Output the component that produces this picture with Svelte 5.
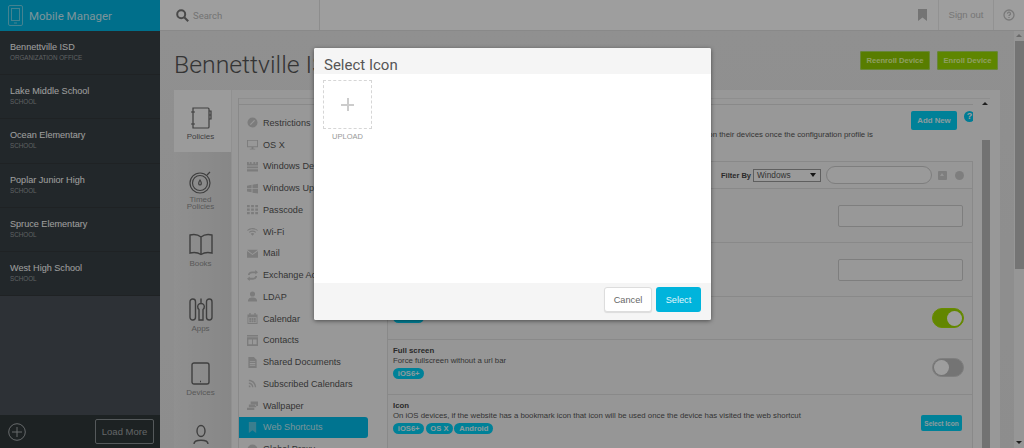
<script>
  const schools = [
    ['Bennettville ISD', 'ORGANIZATION OFFICE'],
    ['Lake Middle School', 'SCHOOL'],
    ['Ocean Elementary', 'SCHOOL'],
    ['Poplar Junior High', 'SCHOOL'],
    ['Spruce Elementary', 'SCHOOL'],
    ['West High School', 'SCHOOL']
  ];
  const menu = [
    { t: 'Restrictions', d: 'M6 .5a5.500 5.500 0 1 0 0 11 5.500 5.500 0 0 0 0-11zM3.200 7.800l4.600-4.600.9.900-4.600 4.600z' },
    { t: 'OS X', d: 'M0 1h12v8H7v1.500h2v1H3v-1h2V9H0zM1 2v6h10V2z' },
    { t: 'Windows Device', d: 'M0 1h2v2h1V1h2v2h2V1h2v2h1V1h2v4H0zM0 6h12v2H0zM0 9h12v2.500H0z' },
    { t: 'Windows Update', d: 'M0 3l5-1v3.700H0zM6 1.800l6-1v4.900H6zM0 6.500h5v3.500l-5-.8zM6 6.500h6v5l-6-1z' },
    { t: 'Passcode', d: 'M0 1h3v2.500H0zM4.500 1h3v2.500h-3zM9 1h3v2.500H9zM0 4.800h3v2.500H0zM4.500 4.800h3v2.500h-3zM9 4.800h3v2.500H9zM0 8.600h3v2.500H0zM4.500 8.600h3v2.500h-3zM9 8.600h3v2.500H9z' },
    { t: 'Wi-Fi', d: 'M0 4.500C3.500 1.500 8.500 1.500 12 4.500l-.8.800C8 2.800 4 2.800.8 5.300zM2 6.500c2.500-2 5.500-2 8 0l-.8.800c-2-1.500-4.400-1.500-6.400 0zM4 8.500c1.300-1 2.700-1 4 0L6 10.500z' },
    { t: 'Mail', d: 'M0 2h12L6 6.500zM0 3.200l6 4.500 6-4.500V10.500H0z' },
    { t: 'Exchange Accounts', d: 'M1 5.500C1 3 3 1.500 5.500 1.500H9V0l3 2.500L9 5V3.500H5.500C4 3.500 3 4.300 3 5.500zM11 6.500c0 2.500-2 4-4.500 4H3V12L0 9.500 3 7v1.500h3.500C8 8.500 9 7.700 9 6.500z' },
    { t: 'LDAP', d: 'M6 .5a2.800 2.800 0 1 1 0 5.600A2.800 2.800 0 0 1 6 .5zM1 11.500c0-3.500 2-4.500 5-4.500s5 1 5 4.500z' },
    { t: 'Calendar', d: 'M2.500 0h1.500v1.500h4V0h1.500v1.500H11.500V12H.5V1.500h2zM1.500 4.500v6.500h9V4.500zM2.500 5.500h2v2h-2zM5 5.500h2v2H5zM7.500 5.500h2v2h-2zM2.500 8h2v2h-2zM5 8h2v2H5zM7.500 8h2v2h-2z' },
    { t: 'Contacts', d: 'M0 0h12v1.500H0zM0 2.500h12V12H0zM1.500 5v5h4V5zM6.500 5v5h4V5z' },
    { t: 'Shared Documents', d: 'M1.500 0H7.500L10.500 3v9h-9zM3 4.500v1h6v-1zM3 6.500v1h6v-1zM3 8.500v1h6v-1z' },
    { t: 'Subscribed Calendars', d: 'M2 2c4.500 0 8 3.500 8 8H8.500C8.500 6.500 5.500 3.500 2 3.500zM2 5c2.800 0 5 2.200 5 5H5.500C5.500 8 4 6.500 2 6.500zM2 8a2 2 0 0 1 2 2H2z' },
    { t: 'Wallpaper', d: 'M4 1.500h8v5H9V4.500H4zM2 5h8v3H2zM0 8.500h8V11H0z' },
    { t: 'Web Shortcuts', d: 'M2 0h8v12L6 9l-4 3z' },
    { t: 'Global Proxy', d: 'M6 .5a5.500 5.500 0 1 0 0 11 5.500 5.500 0 0 0 0-11zM2 5h8v2H2z' }
  ];
</script>

<div class="page">
  <aside class="side">
    <div class="brand">
      <svg width="15" height="21" viewBox="0 0 15 21" fill="none" stroke="#6fd3ea" stroke-width="1"><rect x=".5" y=".5" width="14" height="20" rx="1.500"/><rect x="3.500" y="3.500" width="8" height="12"/><path d="M6 18h3"/></svg>
      <span>Mobile Manager</span>
    </div>
    <div class="list">
      {#each schools as s}
        <div class="school"><b>{s[0]}</b><small>{s[1]}</small></div>
      {/each}
    </div>
    <div class="foot">
      <svg width="18" height="18" viewBox="0 0 18 18" fill="none" stroke="#a5abad" stroke-width="1"><circle cx="9" cy="9" r="8.300"/><path d="M9 4v10M4 9h10"/></svg>
      <span class="more">Load More</span>
    </div>
  </aside>
  <div class="main">
    <header class="top">
      <div class="searchbox">
        <svg class="mag" width="13" height="13" viewBox="0 0 13 13" fill="none" stroke="#777" stroke-width="2"><circle cx="5.200" cy="5.200" r="4"/><path d="M8.200 8.200l4 4"/></svg>
        <span class="search">Search</span>
      </div>
      <span class="fill"></span>
      <svg class="bm" width="9" height="12" viewBox="0 0 9 12"><path d="M0 0h9v12L4.500 8.500 0 12z" fill="#bbb"/></svg>
      <span class="sign">Sign out</span>
      <span class="help"><svg width="12" height="12" viewBox="0 0 12 12" fill="none" stroke="#c4c4c4" stroke-width="1.300"><circle cx="6" cy="6" r="5"/><path d="M4.500 4.700a1.500 1.500 0 1 1 2 1.400c-.4.200-.5.500-.5.900M6 8v1"/></svg></span>
    </header>
    <div class="body">
      <div class="content">
        <div class="heading">
          <h1>Bennettville ISD</h1>
          <div class="greens"><button class="green g1">Reenroll Device</button><button class="green g2">Enroll Device</button></div>
        </div>
        <div class="panel">
          <nav class="tabs">
            <div class="tab on">
              <svg width="22" height="22" viewBox="0 0 22 22" fill="none" stroke="#666" stroke-width="1.200"><path d="M3 1h15a1 1 0 0 1 1 1v18a1 1 0 0 1-1 1H3zM1 5h4M1 17h4M19 4h2v4h-2M19 8h2v4h-2"/></svg>
              <span>Policies</span>
            </div>
            <div class="tab t2">
              <svg width="24" height="25" viewBox="0 0 24 25" fill="none" stroke="#666" stroke-width="1.200"><circle cx="11" cy="14" r="10"/><circle cx="11" cy="14" r="7.500"/><path d="M18 6l3-3M11 11c-2 3-1.500 5 0 5s2-2 0-5z"/></svg>
              <span>Timed<br>Policies</span>
            </div>
            <div class="tab t3">
              <svg width="24" height="23" viewBox="0 0 24 23" fill="none" stroke="#666" stroke-width="1.400"><path d="M12 4C9 1.500 5 1 1 2v18c4-1 8-.5 11 1.500 3-2 7-2.500 11-1.500V2c-4-1-8-.5-11 2zM12 4v17.500"/></svg>
              <span>Books</span>
            </div>
            <div class="tab t4">
              <svg width="24" height="23" viewBox="0 0 24 23" fill="none" stroke="#666" stroke-width="1.400"><rect x="1" y="1" width="5.500" height="21" rx="2.700"/><rect x="17.500" y="1" width="5.500" height="21" rx="2.700"/><path d="M10 22V11.500C8 10 8.500 7 10 6c.5-.5.700-.5 2-.5s1.500 0 2 .5c1.500 1 2 4 0 5.500V22zM12 .5v5"/></svg>
              <span>Apps</span>
            </div>
            <div class="tab t5">
              <svg width="19" height="23" viewBox="0 0 19 23" fill="none" stroke="#666" stroke-width="1.400"><rect x="1" y="1" width="17" height="21" rx="2"/><path d="M9 19.500h1"/></svg>
              <span>Devices</span>
            </div>
            <div class="tab t6">
              <svg width="20" height="24" viewBox="0 0 20 24" fill="none" stroke="#666" stroke-width="1.400"><ellipse cx="10" cy="7" rx="4" ry="5.500"/><path d="M3 20c0-5 14-5 14 0"/></svg>
            </div>
          </nav>
          <div class="inner">
            <div class="innertop"></div>
            <div class="split">
              <ul class="menu">
                {#each menu as m}
                  <li class:active={m.t === 'Web Shortcuts'}>
                    <svg class="ic" width="11" height="11" viewBox="0 0 12 12"><path d={m.d} fill-rule="evenodd"/></svg>{m.t}
                  </li>
                {/each}
              </ul>
              <div class="detail">
                <div class="intro">
                  <p>Users will see these web shortcuts on their devices once the configuration profile is</p>
                  <button class="blue add">Add New</button>
                  <span class="q">?</span>
                </div>
                <div class="table">
                  <div class="filter">
                    <b>Filter By</b>
                    <span class="sel">Windows<em></em></span>
                    <span class="pillinput"></span>
                    <span class="sq"></span>
                    <span class="x"></span>
                  </div>
                  <div class="row r1"><span class="input"></span></div>
                  <div class="row r2"><span class="input"></span></div>
                  <div class="row r3">
                    <div class="txt"><span class="pill">iOS6+</span></div>
                    <span class="toggle yes"><i></i></span>
                  </div>
                  <div class="row r4">
                    <div class="txt"><b>Full screen</b><p>Force fullscreen without a url bar</p><span class="pill">iOS6+</span></div>
                    <span class="toggle"><i></i></span>
                  </div>
                  <div class="row r5">
                    <div class="txt"><b>Icon</b><p>On iOS devices, if the website has a bookmark icon that icon will be used once the device has visited the web shortcut</p><span class="pill">iOS6+</span> <span class="pill">OS X</span> <span class="pill">Android</span></div>
                    <button class="blue pick">Select Icon</button>
                  </div>
                </div>
              </div>
              <div class="bar in"><span class="up"></span><span class="thumb"></span></div>
            </div>
          </div>
        </div>
      </div>
      <div class="bar out"><span class="up"></span><span class="thumb"></span><span class="down"></span></div>
    </div>
  </div>

  <div class="shade"></div>
  <div class="modal">
    <div class="mhead">Select Icon</div>
    <div class="mbody">
      <div class="upload"><span class="plus"></span></div>
      <div class="ulabel">UPLOAD</div>
    </div>
    <div class="mfoot">
      <button class="cancel">Cancel</button>
      <button class="select">Select</button>
    </div>
  </div>
</div>

<style>
  :global(body) { margin: 0; }
  .page { position: relative; width: 1024px; height: 448px; overflow: hidden; display: flex; font-family: "Liberation Sans", Arial, sans-serif; background: #f0f0f0; color: #333; }
  .side { width: 160px; flex: none; display: flex; flex-direction: column; background: #4a5057; }
  .brand { height: 31px; flex: none; background: #00b4e0; display: flex; align-items: center; padding-left: 8px; gap: 6px; box-sizing: border-box; }
  .brand span { font: 400 11.500px Roboto, sans-serif; color: #c8eef8; }
  .list { flex: none; background: #384044; }
  .school { height: 44.200px; box-sizing: border-box; padding-top: 10px; padding-left: 10px; border-bottom: 1px solid #32383b; display: flex; flex-direction: column; }
  .school b { font-weight: 400; font-size: 9.100px; line-height: 12px; color: #fff; }
  .school small { font-size: 6.300px; line-height: 11px; color: #9a9ea0; margin-top: -1px; }
  .foot { margin-top: auto; height: 33px; background: #303739; display: flex; align-items: center; justify-content: space-between; padding: 0 6px 0 8px; box-sizing: border-box; }
  .more { width: 59px; height: 25px; box-sizing: border-box; border: 1px solid #8a9093; border-radius: 2px; font-size: 9.500px; line-height: 23px; text-align: center; color: #a0a5a7; }
  .main { flex: 1; min-width: 0; display: flex; flex-direction: column; }
  .top { height: 31px; flex: none; box-sizing: border-box; background: #fff; border-bottom: 1px solid #ddd; display: flex; align-items: center; font-size: 9.500px; color: #bbb; }
  .searchbox { width: 160px; height: 30px; box-sizing: border-box; display: flex; align-items: center; padding-left: 16px; border-right: 1px solid #e4e4e4; }
  .mag { margin-right: 4px; }
  .search { font-family: Roboto, sans-serif; font-size: 9.500px; }
  .fill { flex: 1; }
  .bm { margin-right: 11px; }
  .sign { width: 54px; height: 30px; line-height: 30px; text-align: center; border-left: 1px solid #ececec; border-right: 1px solid #ececec; font-size: 9.500px; color: #c0c0c0; }
  .help { width: 30px; display: flex; justify-content: center; }
  .body { flex: 1; min-height: 0; display: flex; }
  .content { flex: 1; min-width: 0; padding-left: 14px; background: linear-gradient(#e8e8e8, #e4e4e4); }
  .heading { height: 59px; display: flex; justify-content: space-between; padding-right: 16px; box-sizing: border-box; }
  h1 { margin: 16px 0 0; font: 300 24.800px/36px Roboto, sans-serif; color: #555; white-space: nowrap; }
  .greens { display: flex; gap: 7px; padding-top: 20px; }
  button { font-family: inherit; border: 0; padding: 0; }
  .green { height: 19px; border-radius: 2px; font-size: 7.600px; font-weight: 700; color: #e4ffa0; }
  .g1 { width: 70px; background: #8fca00; box-shadow: 0 0 0 1px #a8d860 inset; }
  .g2 { width: 61px; background: #98d800; box-shadow: 0 0 0 1px #a8d860 inset; }
  .panel { height: 358px; width: 826px; display: flex; background: #f6f6f6; overflow: hidden; }
  .tabs { width: 57px; flex: none; background: linear-gradient(to right, #e8e8e8, #dadada); border-right: 1px solid #e9e9e9; display: flex; flex-direction: column; align-items: center; }
  .tab { width: 100%; padding-right: 4px; display: flex; flex-direction: column; align-items: center; text-align: center; font-size: 8px; line-height: 7px; color: #8f8f8f; box-sizing: border-box; }
  .tab.on { height: 64px; background: #fbfbfb; padding-top: 17px; color: #666; line-height: 10px; }
  .tab.on svg { margin-bottom: 3px; }
  .t2 { height: 82px; padding-top: 17px; }
  .t2 svg { margin-bottom: 2px; }
  .t3, .t4, .t5 { height: 67px; padding-top: 2px; line-height: 10px; }
  .t3 svg, .t4 svg, .t5 svg { margin-bottom: 3px; }
  .t6 { padding-top: 0; }
  .inner { flex: 1; min-width: 0; margin: 8px 10px 0 6px; border-left: 1px solid #dedede; }
  .innertop { height: 5px; border-top: 1px solid #e6e6e6; border-bottom: 1px solid #dedede; }
  .split { display: flex; height: 100%; }
  .menu { width: 148px; flex: none; list-style: none; margin: 7px 0 0; padding: 0; box-sizing: border-box; }
  .menu li { height: 21.750px; display: flex; align-items: center; font-size: 9.100px; color: #555; white-space: nowrap; padding-left: 8px; box-sizing: border-box; margin-right: 19px; }
  .menu li.active { background: #00bce8; color: #c4ecf6; border-radius: 0 3px 3px 0; }
  .ic { fill: #c8c8c8; margin-right: 5px; flex: none; }
  .active .ic { fill: #5fcbe6; }
  .detail { width: 586px; flex: none; display: flex; flex-direction: column; }
  .intro { position: relative; height: 60px; font-size: 7.800px; color: #555; }
  .intro p { margin: 0; padding-top: 25px; text-align: right; padding-right: 100px; white-space: nowrap; }
  .blue { background: #00d0f5; color: #e0fbff; border-radius: 2px; font-weight: 700; }
  .add { position: absolute; top: 6px; right: 16px; width: 46px; height: 19px; font-size: 7.800px; }
  .q { position: absolute; top: 6px; right: -2px; width: 11px; height: 11px; border-radius: 50%; background: #00c8f0; color: #fff; font: 700 9px/11px "Liberation Sans", sans-serif; text-align: center; }
  .table { border: 1px solid #dedede; border-bottom: 0; flex: 1; }
  .filter { height: 26px; display: flex; align-items: center; justify-content: flex-end; background: #f4f4f4; border-bottom: 1px solid #dedede; font-size: 7.500px; color: #444; padding-right: 8px; }
  .sel { width: 68px; height: 13px; box-sizing: border-box; margin-left: 2px; border: 1px solid #999; background: #f8f8f8; font-size: 8.300px; line-height: 11px; padding-left: 3px; position: relative; color: #555; }
  .sel em { position: absolute; right: 4px; top: 3px; border: 3px solid transparent; border-top: 4px solid #222; border-bottom: 0; }
  .pillinput { width: 106px; height: 18px; box-sizing: border-box; border: 1px solid #ccc; border-radius: 9px; margin-left: 5px; background: #f8f8f8; }
  .sq { width: 9px; height: 9px; background: #ccc; border-radius: 1px; margin-left: 6px; position: relative; }
  .sq::after { content: ""; position: absolute; left: 2px; top: 2px; border: 2.500px solid transparent; border-bottom: 3px solid #eee; border-top: 0; }
  .x { width: 9px; height: 9px; background: #ccc; border-radius: 50%; margin-left: 8px; }
  .row { display: flex; justify-content: space-between; align-items: center; border-bottom: 1px solid #dedede; box-sizing: border-box; padding: 0 8px 0 5px; background: #f2f2f2; }
  .r1 { height: 54px; justify-content: flex-end; padding-right: 9px; }
  .r2 { height: 54px; justify-content: flex-end; padding-right: 9px; }
  .r3 { height: 43px; }
  .r4 { height: 55px; }
  .r5 { height: 60px; align-items: flex-start; padding-right: 10px; }
  .input { width: 125px; height: 22px; box-sizing: border-box; border: 1px solid #ccc; border-radius: 2px; background: #f6f6f6; }
  .txt { font-size: 7.800px; line-height: 9.500px; color: #555; align-self: flex-start; }
  .r3 .txt { margin-top: 15px; }
  .r4 .txt, .r5 .txt { padding-top: 6px; }
  .txt b { color: #444; display: block; }
  .txt p { margin: 0 0 3px; }
  .pill { display: inline-block; height: 11px; line-height: 11px; padding: 0 4.800px; border-radius: 6px; background: #00d0f5; color: #e0fbff; font-weight: 700; font-size: 7.600px; vertical-align: top; margin-right: -1px; }
  .toggle { width: 32px; height: 19px; box-sizing: border-box; border-radius: 10px; background: #bbb; border: 1px solid #ccc; position: relative; display: block; }
  .toggle i { position: absolute; left: 1px; top: 1px; width: 15px; height: 15px; border-radius: 50%; background: #fff; }
  .toggle.yes { height: 20px; background: #9ed800; border-color: #a8e000; }
  .toggle.yes i { left: 14px; top: 1.500px; }
  .pick { width: 41px; height: 16px; font-size: 6.500px; margin-top: 20px; }
  .bar { flex: none; background: #f2f2f2; display: flex; flex-direction: column; position: relative; }
  .bar.in { width: 17px; margin-top: -6px; align-items: flex-end; background: #f6f6f6; }
  .bar.in .up { margin-top: 3px; margin-right: 2px; }
  .bar.in .thumb { width: 8px; height: 320px; margin-top: 35px; background: #b8b8b8; }
  .up { border: 3px solid transparent; border-bottom: 3px solid #333; border-top: 0; }
  .out { width: 10px; align-items: center; }
  .out .up { margin-top: 3px; border-bottom-color: #aaa; }
  .out .thumb { width: 9px; height: 228px; margin-top: 4px; background: #bbb; }
  .down { position: absolute; bottom: 4px; border: 3px solid transparent; border-top: 3px solid #333; border-bottom: 0; }
  .shade { position: absolute; inset: 0; background: rgba(0,0,0,.38); }
  .modal { position: absolute; left: 314px; top: 48px; width: 397px; height: 272px; background: #fff; border-radius: 2px; box-shadow: 0 1px 4px rgba(0,0,0,.5); display: flex; flex-direction: column; overflow: hidden; }
  .mhead { height: 26px; flex: none; background: #f5f5f5; font: 400 15px/34px Roboto, sans-serif; color: #555; padding-left: 10px; box-sizing: border-box; }
  .mbody { flex: 1; padding: 6px 0 0 9px; }
  .upload { width: 49px; height: 49px; box-sizing: border-box; border: 1px dashed #d6d6d6; position: relative; }
  .plus { position: absolute; left: 17px; top: 17px; width: 13px; height: 13px; background: linear-gradient(#ccc,#ccc) center/13px 2px no-repeat, linear-gradient(#ccc,#ccc) center/2px 13px no-repeat; }
  .ulabel { width: 49px; text-align: center; font-size: 7.500px; color: #999; margin-top: 3px; line-height: 10px; }
  .mfoot { height: 37px; flex: none; background: #f5f5f5; display: flex; justify-content: flex-end; align-items: flex-start; gap: 4px; padding: 4px 10px 0 0; box-sizing: border-box; }
  .mfoot button { height: 25px; border-radius: 3px; font-size: 9.200px; }
  .cancel { width: 48px; background: #fff; border: 1px solid #ddd; color: #666; box-sizing: border-box; box-shadow: 0 1px 1px rgba(0,0,0,.1); }
  .select { width: 45px; background: #00b4dc; color: #e2f7fc; font-weight: 400; }
</style>
